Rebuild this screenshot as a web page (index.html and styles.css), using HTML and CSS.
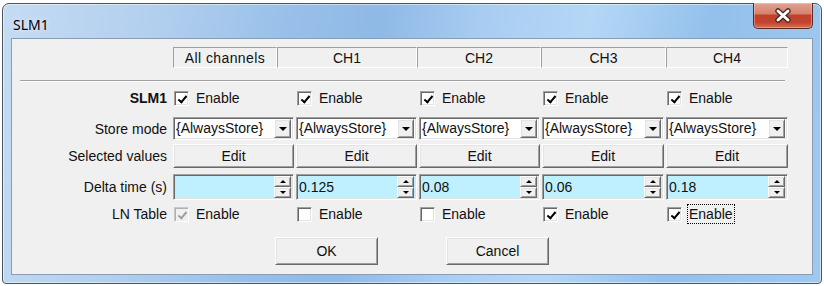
FILE: index.html
```html
<!DOCTYPE html>
<html lang="en">
<head>
  <meta charset="UTF-8">
  <title>SLM1</title>
  <link rel="stylesheet" href="styles.css">
</head>
<body>

  <div class="window">
    <div class="titlebar">
      <span class="title">SLM1</span>
      <button class="close-btn" aria-label="Close">
        <svg width="18" height="15" viewBox="0 0 18 15">
          <path d="M4 3 L14 12 M14 3 L4 12" stroke="#4a2620" stroke-width="5.5" stroke-linecap="round"/>
          <path d="M4 3 L14 12 M14 3 L4 12" stroke="#fff" stroke-width="3" stroke-linecap="round"/>
        </svg>
      </button>
    </div>

    <div class="client">
      <div class="header-row">
        <div class="head-cell head-all">All channels</div>
        <div class="head-cell head-ch1">CH1</div>
        <div class="head-cell head-ch2">CH2</div>
        <div class="head-cell head-ch3">CH3</div>
        <div class="head-cell head-ch4">CH4</div>
      </div>

      <div class="separator"></div>

      <!-- SLM1 enable -->
      <div class="row row-enable">
        <span class="row-label bold">SLM1</span>
        <label class="check"><span class="box checked"></span>Enable</label>
        <label class="check"><span class="box checked"></span>Enable</label>
        <label class="check"><span class="box checked"></span>Enable</label>
        <label class="check"><span class="box checked"></span>Enable</label>
        <label class="check"><span class="box checked"></span>Enable</label>
      </div>

      <!-- Store mode -->
      <div class="row row-store">
        <span class="row-label">Store mode</span>
        <div class="combo sunken"><span class="combo-text">{AlwaysStore}</span><span class="drop-btn raised"><i class="tri-down"></i></span></div>
        <div class="combo sunken"><span class="combo-text">{AlwaysStore}</span><span class="drop-btn raised"><i class="tri-down"></i></span></div>
        <div class="combo sunken"><span class="combo-text">{AlwaysStore}</span><span class="drop-btn raised"><i class="tri-down"></i></span></div>
        <div class="combo sunken"><span class="combo-text">{AlwaysStore}</span><span class="drop-btn raised"><i class="tri-down"></i></span></div>
        <div class="combo sunken"><span class="combo-text">{AlwaysStore}</span><span class="drop-btn raised"><i class="tri-down"></i></span></div>
      </div>

      <!-- Selected values -->
      <div class="row row-edit">
        <span class="row-label">Selected values</span>
        <button class="btn raised">Edit</button>
        <button class="btn raised">Edit</button>
        <button class="btn raised">Edit</button>
        <button class="btn raised">Edit</button>
        <button class="btn raised">Edit</button>
      </div>

      <!-- Delta time -->
      <div class="row row-delta">
        <span class="row-label">Delta time (s)</span>
        <div class="spin sunken"><span class="spin-text"></span><span class="spin-btns"><span class="spin-btn raised"><i class="tri-up"></i></span><span class="spin-btn raised"><i class="tri-down small"></i></span></span></div>
        <div class="spin sunken"><span class="spin-text">0.125</span><span class="spin-btns"><span class="spin-btn raised"><i class="tri-up"></i></span><span class="spin-btn raised"><i class="tri-down small"></i></span></span></div>
        <div class="spin sunken"><span class="spin-text">0.08</span><span class="spin-btns"><span class="spin-btn raised"><i class="tri-up"></i></span><span class="spin-btn raised"><i class="tri-down small"></i></span></span></div>
        <div class="spin sunken"><span class="spin-text">0.06</span><span class="spin-btns"><span class="spin-btn raised"><i class="tri-up"></i></span><span class="spin-btn raised"><i class="tri-down small"></i></span></span></div>
        <div class="spin sunken"><span class="spin-text">0.18</span><span class="spin-btns"><span class="spin-btn raised"><i class="tri-up"></i></span><span class="spin-btn raised"><i class="tri-down small"></i></span></span></div>
      </div>

      <!-- LN Table -->
      <div class="row row-ln">
        <span class="row-label">LN Table</span>
        <label class="check"><span class="box checked disabled"></span>Enable</label>
        <label class="check"><span class="box"></span>Enable</label>
        <label class="check"><span class="box"></span>Enable</label>
        <label class="check"><span class="box checked"></span>Enable</label>
        <label class="check"><span class="box checked"></span><span class="focus">Enable</span></label>
      </div>

      <div class="dialog-buttons">
        <button class="btn raised dlg-btn">OK</button>
        <button class="btn raised dlg-btn">Cancel</button>
      </div>
    </div>
  </div>

</body>
</html>
```

FILE: styles.css
```css
/* Global Styles */
* {
  box-sizing: border-box;
}

body {
  margin: 0;
  background-color: #fff;
  font-family: "Liberation Sans", Arial, sans-serif;
  font-size: 14px;
  color: #111;
}

/* Window frame */
.window {
  position: relative;
  display: flex;
  flex-direction: column;
  width: 820px;
  height: 281px;
  margin: 3px 0 0 2px;
  border: 1px solid #4b5560;
  border-radius: 7px 7px 4px 4px;
  background: linear-gradient(100deg, #c4dbf3 0%, #b2cfee 18%, #97bfe9 34%, #8fb9e6 44%, #a9cdf2 56%, #b5d7f6 68%, #93c0ec 82%, #a0c9f0 100%);
  box-shadow: inset 0 0 0 1px rgba(255, 255, 255, 0.5);
}

.titlebar {
  height: 34px;
  padding: 6px 0 0 10px;
  display: flex;
  align-items: center;
}

.title {
  font-family: "Noto Sans", "Open Sans", sans-serif;
  font-size: 14px;
  color: #000;
  text-shadow: 0 0 6px rgba(255, 255, 255, 0.9);
}

.close-btn {
  position: absolute;
  top: -1px;
  right: 8px;
  width: 60px;
  height: 26px;
  padding: 0;
  border: 1px solid #5b2a22;
  border-top: none;
  border-radius: 0 0 5px 5px;
  background: linear-gradient(to bottom, #e2a394 0%, #d6816e 42%, #c0402a 50%, #c2452f 78%, #d86f55 100%);
  box-shadow: inset 0 0 0 1px rgba(255, 215, 205, 0.4);
  display: flex;
  align-items: center;
  justify-content: center;
}

/* Client area */
.client {
  flex: 1;
  margin: 0 8px 8px 8px;
  border: 1px solid #8b9db3;
  background-color: #f0f0f0;
}

.header-row {
  display: flex;
  margin: 8px 0 0 161px;
  height: 21px;
}

.head-cell {
  display: flex;
  align-items: center;
  justify-content: center;
  border: 1px solid;
  border-color: #a0a0a0 #fff #fff #a0a0a0;
}

.head-all { width: 104px; letter-spacing: 0.4px; }
.head-ch1 { width: 140px; }
.head-ch2 { width: 124px; }
.head-ch3 { width: 125px; }
.head-ch4 { width: 122px; }

.separator {
  margin: 12px 0 0 8px;
  width: 765px;
  border-top: 1px solid #a0a0a0;
  border-bottom: 1px solid #fff;
}

/* Rows */
.row {
  display: grid;
  grid-template-columns: 159px 121px 121px 121px 122px 122px;
  column-gap: 2px;
  align-items: center;
}

.row-label {
  text-align: right;
  padding-right: 4px;
  white-space: nowrap;
}

.bold {
  font-weight: bold;
}

.row-enable { margin-top: 8px; height: 15px; }
.row-store { margin-top: 12px; height: 23px; }
.row-edit { margin-top: 4px; height: 24px; }
.row-delta { margin-top: 6px; height: 26px; }
.row-ln { margin-top: 6px; height: 15px; }

/* 3D borders */
.sunken {
  border: 1px solid;
  border-color: #a0a0a0 #fff #fff #a0a0a0;
  padding: 1px;
  box-shadow: inset 1px 1px 0 #696969, inset -1px -1px 0 #e3e3e3;
}

.raised {
  border: 1px solid;
  border-color: #fff #696969 #696969 #fff;
  box-shadow: inset 1px 1px 0 #e3e3e3, inset -1px -1px 0 #a0a0a0;
  background-color: #f0f0f0;
}

/* Checkboxes */
.check {
  display: flex;
  align-items: center;
  gap: 7px;
  height: 15px;
  padding-left: 1px;
}

.box {
  position: relative;
  width: 15px;
  height: 15px;
  flex: none;
  border: 1px solid;
  border-color: #a0a0a0 #fff #fff #a0a0a0;
  box-shadow: inset 1px 1px 0 #696969, inset -1px -1px 0 #e3e3e3;
  background-color: #fff;
}

.box.checked::after {
  content: "";
  position: absolute;
  left: 5px;
  top: 2px;
  width: 3px;
  height: 7px;
  border: solid #000;
  border-width: 0 2px 2px 0;
  transform: rotate(40deg);
}

.box.disabled {
  background-color: #f0f0f0;
  border-color: #c8c8c8 #fff #fff #c8c8c8;
  box-shadow: inset 1px 1px 0 #b0b0b0, inset -1px -1px 0 #eee;
}

.box.disabled::after {
  border-color: #a0a0a0;
}

.focus {
  outline: 1px dotted #000;
  outline-offset: 1px;
}

/* Combo box */
.combo {
  display: flex;
  height: 23px;
  background-color: #fff;
}

.combo-text {
  flex: 1;
  padding-left: 1px;
  line-height: 19px;
  white-space: nowrap;
  overflow: hidden;
}

.drop-btn {
  width: 17px;
  height: 19px;
  margin-right: 1px;
  display: flex;
  align-items: center;
  justify-content: center;
}

.tri-down {
  width: 0;
  height: 0;
  border-left: 4px solid transparent;
  border-right: 4px solid transparent;
  border-top: 4px solid #000;
}

.tri-down.small,
.tri-up {
  border-left-width: 3px;
  border-right-width: 3px;
  border-top-width: 3px;
}

.tri-up {
  width: 0;
  height: 0;
  border-left: 3px solid transparent;
  border-right: 3px solid transparent;
  border-bottom: 3px solid #000;
}

/* Buttons */
.btn {
  height: 24px;
  padding: 0;
  font-family: inherit;
  font-size: 14px;
  color: #111;
}

/* Spin edit */
.spin {
  display: flex;
  height: 26px;
  background-color: #bff0ff;
}

.spin-text {
  flex: 1;
  padding-left: 1px;
  line-height: 22px;
}

.spin-btns {
  display: flex;
  flex-direction: column;
  width: 17px;
  margin-right: 1px;
}

.spin-btn {
  height: 11px;
  display: flex;
  align-items: center;
  justify-content: center;
}

/* Dialog buttons */
.dialog-buttons {
  display: flex;
  justify-content: center;
  gap: 68px;
  margin-top: 16px;
}

.dlg-btn {
  width: 103px;
  height: 28px;
}
```
